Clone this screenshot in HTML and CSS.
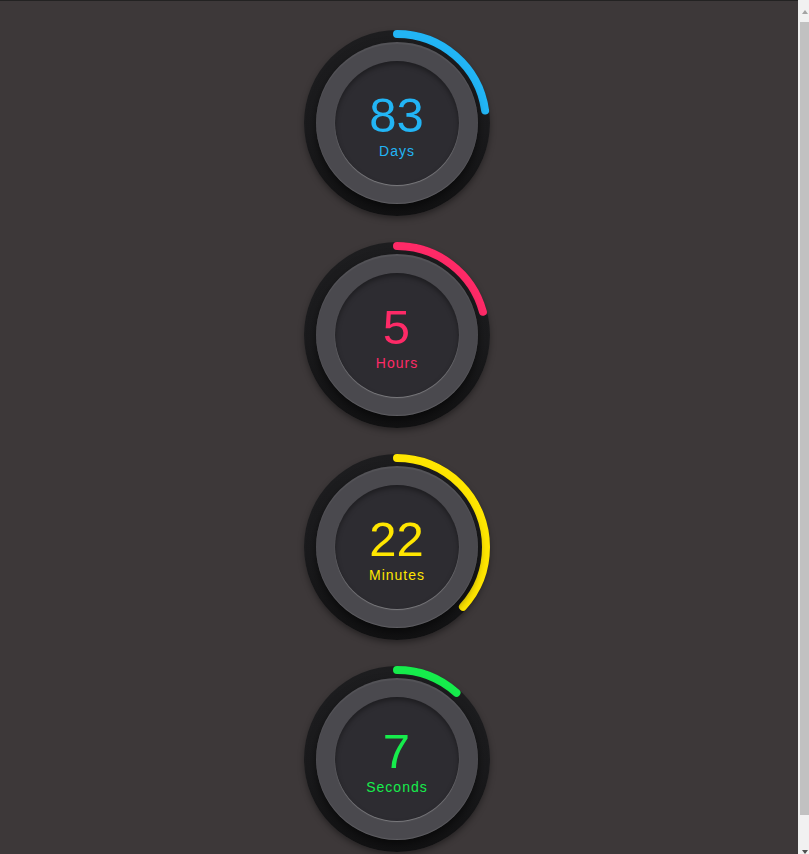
FILE: index.html
```html
<!DOCTYPE html>
<html>
<head>
<meta charset="utf-8">
<link rel="stylesheet" href="styles.css">
</head>
<body>
<div class="page">
<main class="timer">
  <div class="dial dial-days">
    <div class="ring-outer"></div>
    <svg class="arc" viewBox="0 0 186 186"><circle cx="93" cy="93" r="89" stroke-dasharray="127 600"></circle></svg>
    <div class="ring-mid"></div>
    <div class="face">
      <span class="num">83</span>
      <span class="label">Days</span>
    </div>
  </div>
  <div class="dial dial-hours">
    <div class="ring-outer"></div>
    <svg class="arc" viewBox="0 0 186 186"><circle cx="93" cy="93" r="89" stroke-dasharray="116 600"></circle></svg>
    <div class="ring-mid"></div>
    <div class="face">
      <span class="num">5</span>
      <span class="label">Hours</span>
    </div>
  </div>
  <div class="dial dial-minutes">
    <div class="ring-outer"></div>
    <svg class="arc" viewBox="0 0 186 186"><circle cx="93" cy="93" r="89" stroke-dasharray="205 600"></circle></svg>
    <div class="ring-mid"></div>
    <div class="face">
      <span class="num">22</span>
      <span class="label">Minutes</span>
    </div>
  </div>
  <div class="dial dial-seconds">
    <div class="ring-outer"></div>
    <svg class="arc" viewBox="0 0 186 186"><circle cx="93" cy="93" r="89" stroke-dasharray="65 600"></circle></svg>
    <div class="ring-mid"></div>
    <div class="face">
      <span class="num">7</span>
      <span class="label">Seconds</span>
    </div>
  </div>
</main>
<aside class="scrollbar">
  <span class="arrow arrow-up"></span>
  <span class="thumb"></span>
  <span class="arrow arrow-down"></span>
</aside>
</div>
</body>
</html>
```

FILE: styles.css
```css
html, body {
  margin: 0;
  padding: 0;
}
body {
  background: #3d3839;
  font-family: "Liberation Sans", Arial, sans-serif;
  overflow: hidden;
}
.page {
  display: flex;
  align-items: flex-start;
}
.timer {
  flex: 1;
  display: flex;
  flex-direction: column;
  align-items: center;
  gap: 26px;
  padding: 29px 5px 30px 0;
  border-top: 1px solid #232222;
}
.scrollbar {
  width: 11px;
  height: 854px;
  flex: none;
  background: #f1f1f1;
  display: flex;
  flex-direction: column;
  align-items: flex-end;
}
.arrow {
  width: 0;
  height: 0;
  border-left: 3px solid transparent;
  border-right: 3px solid transparent;
  margin-right: 1px;
}
.arrow-up {
  margin-top: 10px;
  border-bottom: 4px solid #a3a3a3;
}
.arrow-down {
  margin-top: 35px;
  border-top: 4px solid #505050;
}
.thumb {
  width: 9px;
  height: 794px;
  margin-top: 8px;
  background: #c1c1c1;
}
.dial {
  width: 186px;
  height: 186px;
  display: grid;
  place-items: center;
}
.dial > * {
  grid-area: 1 / 1;
}
.ring-outer {
  width: 186px;
  height: 186px;
  border-radius: 50%;
  background: linear-gradient(180deg, #1d1d1f 0%, #1a1a1c 55%, #111112 100%);
  box-shadow: 0 3px 6px rgba(0,0,0,0.35);
}
.arc {
  width: 186px;
  height: 186px;
  transform: rotate(-90deg);
  z-index: 1;
}
.arc circle {
  fill: none;
  stroke-width: 8;
  stroke-linecap: round;
}
.ring-mid {
  width: 162px;
  height: 162px;
  border-radius: 50%;
  background: #4a494e;
  box-shadow: 0 4px 8px rgba(0,0,0,0.55), inset 0 -1px 1px rgba(255,255,255,0.12), inset 0 2px 1px rgba(255,255,255,0.06);
  z-index: 2;
}
.face {
  width: 124px;
  height: 124px;
  border-radius: 50%;
  background: #2d2c31;
  box-shadow: 0 1px 1px rgba(255,255,255,0.28), inset 0 3px 5px rgba(0,0,0,0.35);
  z-index: 3;
  display: flex;
  flex-direction: column;
  align-items: center;
  justify-content: center;
}
.num {
  font-size: 49px;
  line-height: 49px;
  margin-top: 3px;
}
.label {
  font-size: 14px;
  line-height: 14px;
  letter-spacing: 1px;
  margin-top: 4px;
  margin-left: 1px;
}
.dial-days { color: #22b5f5; }
.dial-days .arc circle { stroke: #22b5f5; }
.dial-hours { color: #fe2a67; }
.dial-hours .arc circle { stroke: #fe2a67; }
.dial-minutes { color: #ffe600; }
.dial-minutes .arc circle { stroke: #ffe600; }
.dial-seconds { color: #16ec4c; }
.dial-seconds .arc circle { stroke: #16ec4c; }
```
